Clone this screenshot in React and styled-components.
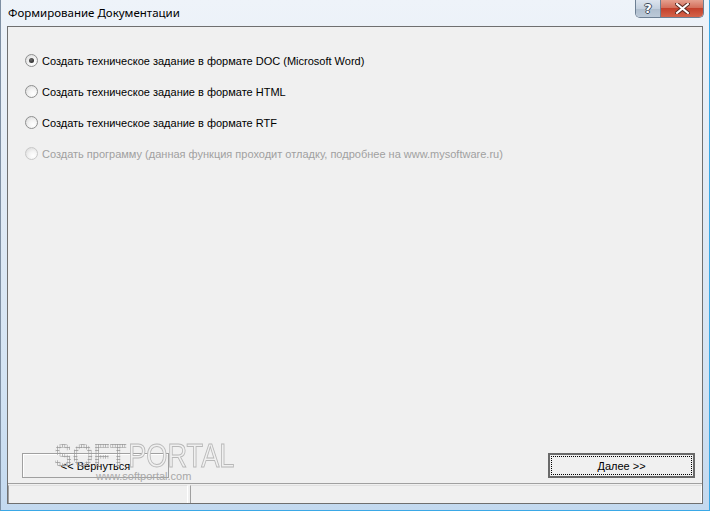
import { createGlobalStyle } from 'styled-components';
import styled from 'styled-components';

const GlobalStyle = createGlobalStyle`
  html, body {
    margin: 0;
    padding: 0;
    background: #ffffff;
  }
  body {
    font-family: "Liberation Sans", Arial, sans-serif;
  }
`;

const options = [
  { label: 'Создать техническое задание в формате DOC (Microsoft Word)', checked: true },
  { label: 'Создать техническое задание в формате HTML' },
  { label: 'Создать техническое задание в формате RTF' },
  {
    label: 'Создать программу (данная функция проходит отладку, подробнее на www.mysoftware.ru)',
    disabled: true,
  },
];

const App = () => {
  return (
    <>
      <GlobalStyle />
      <Window>
        <TitleBar>
          <Title>Формирование Документации</Title>
          <Caption>
            <HelpButton>?</HelpButton>
            <CloseButton>
              <svg width="15" height="11" viewBox="0 0 15 11">
                <path
                  d="M2 1 L13 10 M13 1 L2 10"
                  stroke="#5a2a22"
                  strokeWidth="4"
                  strokeLinecap="square"
                />
                <path
                  d="M2 1 L13 10 M13 1 L2 10"
                  stroke="#ffffff"
                  strokeWidth="2"
                  strokeLinecap="square"
                />
              </svg>
            </CloseButton>
          </Caption>
        </TitleBar>

        <Client>
          <Options>
            {options.map((o) => (
              <Option key={o.label} disabled={o.disabled}>
                <Radio checked={o.checked} disabled={o.disabled} />
                <span>{o.label}</span>
              </Option>
            ))}
          </Options>

          <ButtonRow>
            <Button>&lt;&lt; Вернуться</Button>
            <Button $default>
              <Focus>Далее &gt;&gt;</Focus>
            </Button>
          </ButtonRow>

          <StatusBar>
            <Panel $w="178px" />
            <Panel />
          </StatusBar>

          {/* screenshot site watermark */}
          <Watermark>
            <Mark>
              <Dotted>SOFT</Dotted>
              <Outlined>PORTAL</Outlined>
            </Mark>
            <Url>www.softportal.com</Url>
          </Watermark>
        </Client>
      </Window>
    </>
  );
};

const Window = styled.div`
  width: 710px;
  height: 511px;
  box-sizing: border-box;
  display: flex;
  flex-direction: column;
  padding: 0 6px 6px 6px;
  background: linear-gradient(to bottom, #eef3f9 0%, #e2ebf5 35%, #d3e3f3 75%, #c3d9ef 100%);
  border-left: 1px solid #7e8fa3;
  border-right: 1px solid #3aa8e6;
  border-bottom: 1px solid #3aa8e6;
`;

const TitleBar = styled.div`
  height: 26px;
  display: flex;
  align-items: flex-start;
  justify-content: space-between;
`;

const Title = styled.div`
  font-family: "Noto Sans", "DejaVu Sans", sans-serif;
  font-size: 11.5px;
  color: #000;
  padding: 5px 0 0 1px;
`;

const Caption = styled.div`
  display: flex;
  margin-right: -1px;
  border: 1px solid #6d7f93;
  border-top: none;
  border-radius: 0 0 5px 5px;
  overflow: hidden;
  height: 17px;
`;

const HelpButton = styled.div`
  width: 24px;
  display: flex;
  align-items: center;
  justify-content: center;
  font-family: "DejaVu Sans", sans-serif;
  font-weight: bold;
  font-size: 13px;
  line-height: 1;
  color: #ffffff;
  text-shadow: 1px 0 0 #3c4a5a, -1px 0 0 #3c4a5a, 0 1px 0 #3c4a5a, 0 -1px 0 #3c4a5a;
  background: linear-gradient(to bottom, #dce4ee 0%, #c4d0de 50%, #aebdcd 51%, #bcc9d8 100%);
  border-right: 1px solid #6d7f93;
`;

const CloseButton = styled.div`
  width: 42px;
  display: flex;
  align-items: center;
  justify-content: center;
  background: linear-gradient(to bottom, #e5a08f 0%, #d4705c 45%, #c4412c 50%, #d4644a 100%);
`;

const Client = styled.div`
  position: relative;
  flex: 1;
  display: flex;
  flex-direction: column;
  background: #f0f0f0;
  border: 1px solid #6f6f6f;
`;

const Options = styled.div`
  flex: 1;
  display: flex;
  flex-direction: column;
  gap: 18px;
  padding: 27px 0 0 17px;
`;

const Option = styled.label`
  display: flex;
  align-items: center;
  gap: 4px;
  height: 13px;
  font-family: "Liberation Sans", Arial, sans-serif;
  font-size: 11px;
  color: ${(p) => (p.disabled ? '#a0a0a0' : '#000')};
`;

const Radio = styled.span`
  width: 11px;
  height: 11px;
  border-radius: 50%;
  flex: none;
  position: relative;
  border: 1px solid ${(p) => (p.disabled ? '#c8c8c8' : '#8e8f8f')};
  background: radial-gradient(circle at 65% 70%, #ffffff 0%, #f4f4f4 40%, #d6d6d6 100%);

  &::after {
    content: '';
    display: ${(p) => (p.checked ? 'block' : 'none')};
    position: absolute;
    left: 3px;
    top: 3px;
    width: 5px;
    height: 5px;
    border-radius: 50%;
    background: radial-gradient(circle at 40% 35%, #6a6a6a 0%, #1a1a1a 100%);
  }
`;

const ButtonRow = styled.div`
  display: flex;
  justify-content: space-between;
  padding: 0 7px 5px 14px;
`;

const Button = styled.div`
  width: 147px;
  height: 25px;
  box-sizing: border-box;
  display: flex;
  align-items: center;
  justify-content: center;
  font-family: "Liberation Sans", Arial, sans-serif;
  font-size: 11px;
  color: #000;
  background: #f0f0f0;
  border: ${(p) => (p.$default ? '2px solid #6a6a6a' : '1px solid #a0a0a0')};
  box-shadow: ${(p) => (p.$default ? 'none' : 'inset 1px 1px 0 #ffffff')};
  padding: 1px;
`;

const Focus = styled.div`
  width: 100%;
  height: 100%;
  box-sizing: border-box;
  display: flex;
  align-items: center;
  justify-content: center;
  border: 1px dotted #000;
`;

const StatusBar = styled.div`
  height: 18px;
  display: flex;
  gap: 2px;
  border-top: 1px solid #a0a0a0;
  padding-top: 1px;
`;

const Panel = styled.div`
  width: ${(p) => p.$w || 'auto'};
  flex: ${(p) => (p.$w ? 'none' : '1')};
  border-left: 1px solid #a0a0a0;
  border-top: 1px solid #e0e0e0;
  border-right: 1px solid #ffffff;
`;

const Watermark = styled.div`
  position: absolute;
  left: 46px;
  top: 413px;
  display: flex;
  flex-direction: column;
  pointer-events: none;
`;

const Mark = styled.div`
  display: flex;
  font-family: "Liberation Sans", Arial, sans-serif;
  font-size: 34px;
  line-height: 30px;
  transform: scaleX(0.8);
  transform-origin: left center;
`;

const Dotted = styled.span`
  font-weight: bold;
  color: transparent;
  background: radial-gradient(circle, #9a9a9a 45%, transparent 55%) 0 0 / 3px 3px;
  -webkit-background-clip: text;
  background-clip: text;
`;

const Outlined = styled.span`
  margin-left: 2px;
  color: #f0f0f0;
  -webkit-text-stroke: 1px #b8b8b8;
`;

const Url = styled.div`
  font-family: "Liberation Sans", Arial, sans-serif;
  font-size: 11px;
  color: #a8a8a8;
  margin: 0 0 0 42px;
`;

export default App;
